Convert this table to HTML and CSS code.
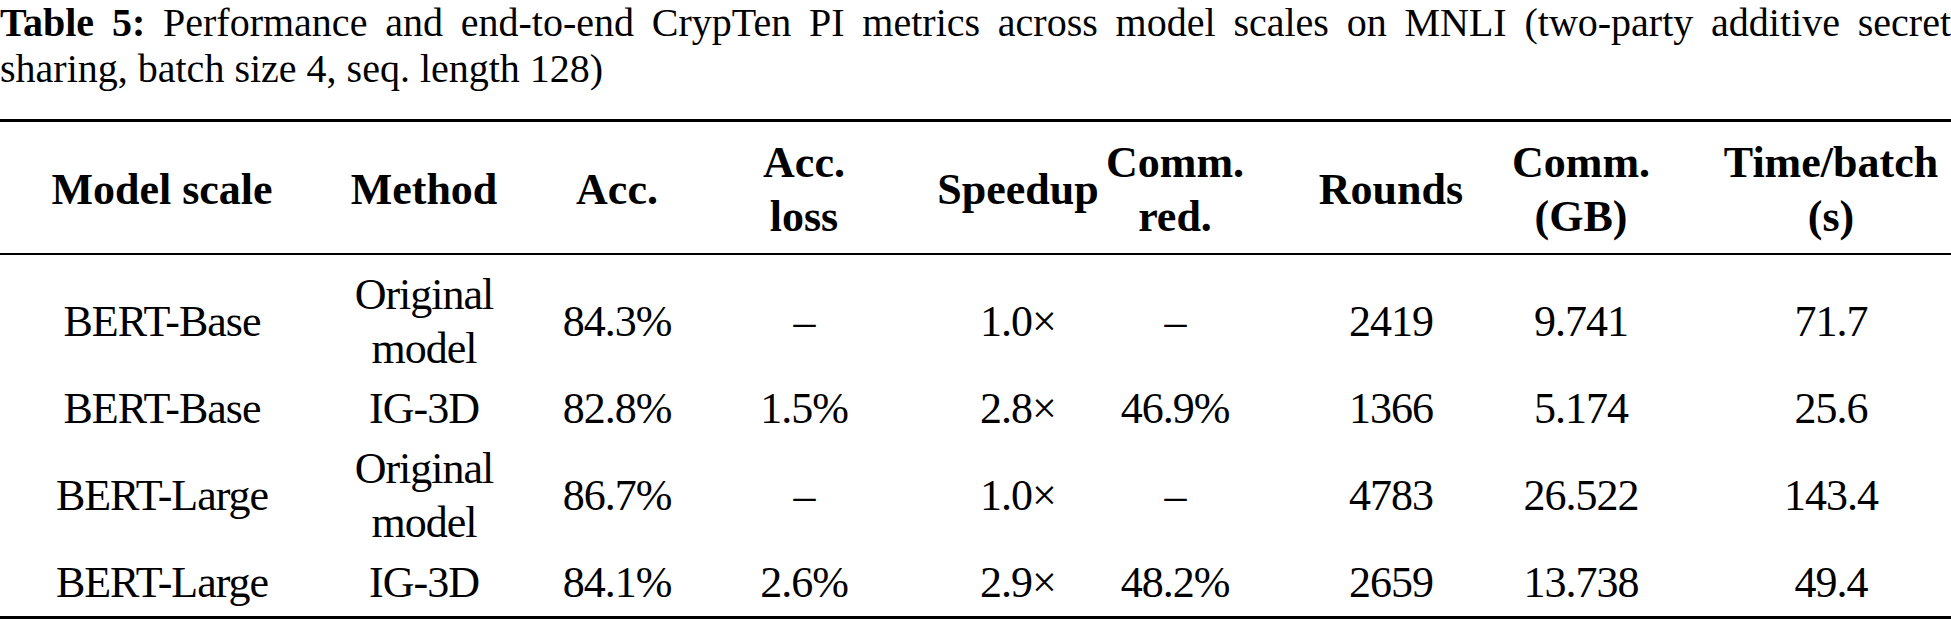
FILE: index.html
```html
<!DOCTYPE html>
<html lang="en">
<head>
<meta charset="utf-8">
<title>Table 5</title>
<link rel="stylesheet" href="styles.css">
</head>
<body>
<main class="page">
  <p class="caption"><b>Table 5:</b> Performance and end-to-end CrypTen PI metrics across model scales on MNLI (two-party additive secret sharing, batch size 4, seq. length 128)</p>
  <table class="results">
    <colgroup>
      <col class="w1"><col class="w2"><col class="w3"><col class="w4"><col class="w5"><col class="w6"><col class="w7"><col class="w8"><col class="w9">
    </colgroup>
    <thead>
      <tr>
        <th>Model scale</th>
        <th>Method</th>
        <th>Acc.</th>
        <th>Acc.<br>loss</th>
        <th>Speedup</th>
        <th>Comm.<br>red.</th>
        <th>Rounds</th>
        <th>Comm.<br>(GB)</th>
        <th>Time/batch<br>(s)</th>
      </tr>
    </thead>
    <tbody>
      <tr>
        <td>BERT-Base</td>
        <td>Original<br>model</td>
        <td>84.3%</td>
        <td>–</td>
        <td>1.0×</td>
        <td>–</td>
        <td>2419</td>
        <td>9.741</td>
        <td>71.7</td>
      </tr>
      <tr>
        <td>BERT-Base</td>
        <td>IG-3D</td>
        <td>82.8%</td>
        <td>1.5%</td>
        <td>2.8×</td>
        <td>46.9%</td>
        <td>1366</td>
        <td>5.174</td>
        <td>25.6</td>
      </tr>
      <tr>
        <td>BERT-Large</td>
        <td>Original<br>model</td>
        <td>86.7%</td>
        <td>–</td>
        <td>1.0×</td>
        <td>–</td>
        <td>4783</td>
        <td>26.522</td>
        <td>143.4</td>
      </tr>
      <tr>
        <td>BERT-Large</td>
        <td>IG-3D</td>
        <td>84.1%</td>
        <td>2.6%</td>
        <td>2.9×</td>
        <td>48.2%</td>
        <td>2659</td>
        <td>13.738</td>
        <td>49.4</td>
      </tr>
    </tbody>
  </table>
</main>
</body>
</html>
```
FILE: styles.css
```css
html, body {
  margin: 0;
  padding: 0;
  background: #ffffff;
}

body {
  color: #000000;
  font-family: "Liberation Serif", "Times New Roman", serif;
}

.page {
  width: 1951px;
}

.caption {
  margin: 0 0 27px 0;
  font-family: "Liberation Serif", "Times New Roman", serif;
  font-size: 40px;
  line-height: 46px;
  text-align: justify;
}

.caption b {
  font-weight: 700;
}

.results {
  width: 1951px;
  table-layout: fixed;
  border-collapse: collapse;
  border-top: 3px solid #000;
  border-bottom: 3px solid #000;
  font-family: "Liberation Serif", "Times New Roman", serif;
  font-size: 44px;
  line-height: 54px;
}

.w1 { width: 311px; }
.w2 { width: 219px; }
.w3 { width: 186px; }
.w4 { width: 176px; }
.w5 { width: 211px; }
.w6 { width: 178px; }
.w7 { width: 207px; }
.w8 { width: 198px; }
.w9 { width: 265px; }

.results th,
.results td {
  font-family: "Liberation Serif", "Times New Roman", serif;
  text-align: center;
  vertical-align: middle;
  padding: 3px 0;
  white-space: nowrap;
}

.results thead th {
  font-weight: 700;
  padding-top: 14px;
  padding-bottom: 9px;
  border-bottom: 2px solid #000;
}

.results td {
  letter-spacing: -1px;
}

.results tbody tr:first-child td {
  padding-top: 13px;
}

.results tbody tr:last-child td {
  padding-bottom: 6px;
}

/* per-column centring offsets */
.results tr > :nth-child(1) { padding-left: 13px; }
.results tr > :nth-child(2) { padding-left: 7px; }
.results tr > :nth-child(3) { padding-right: 12px; }
.results tr > :nth-child(5) { padding-left: 41px; }
.results tr > :nth-child(6) { padding-right: 34px; }
.results tr > :nth-child(7) { padding-left: 13px; }
.results tr > :nth-child(8) { padding-right: 12px; }
.results tr > :nth-child(9) { padding-left: 25px; }
```
